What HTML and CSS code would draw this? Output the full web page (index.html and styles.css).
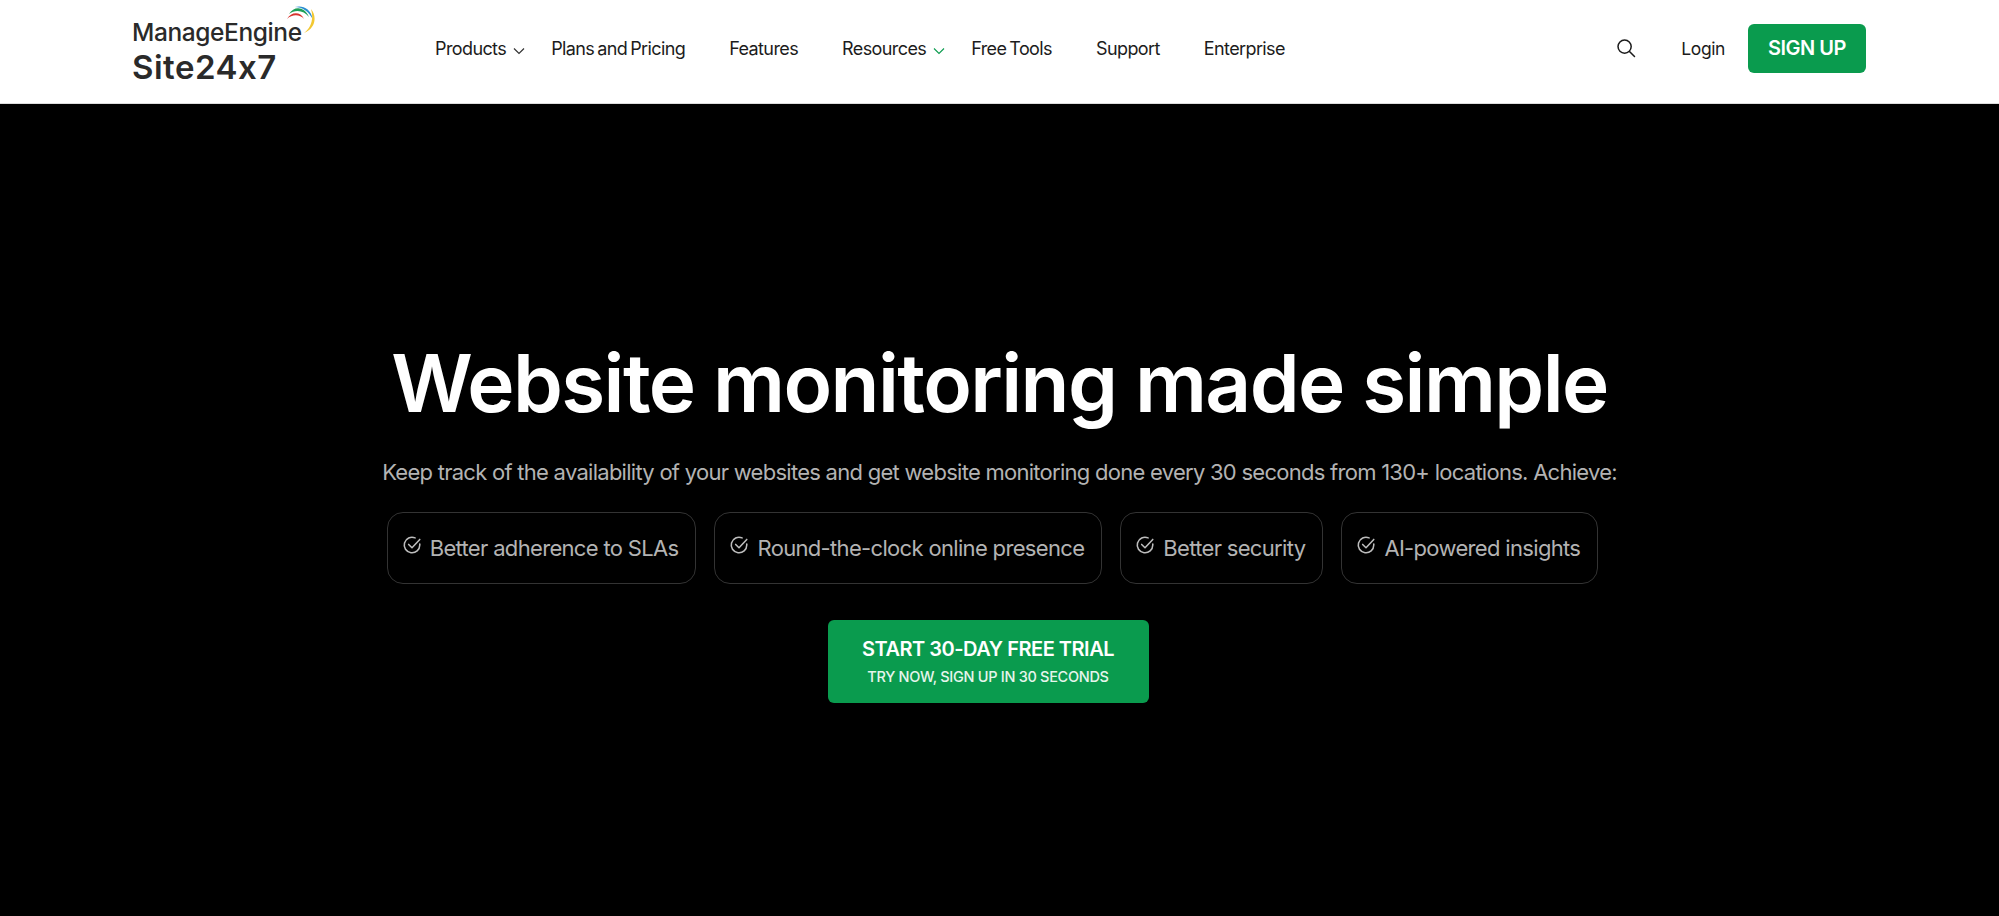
FILE: index.html
```html
<!DOCTYPE html>
<html lang="en">
<head>
<meta charset="utf-8">
<title>Website monitoring made simple</title>
<link rel="stylesheet" href="styles.css">
</head>
<body>
<header class="header">
  <a class="logo" href="#">
    <span class="logo-me">ManageEngine</span>
    <svg class="logo-arc" viewBox="0 0 28 28" width="28" height="28">
      <path d="M0 13C4 6 13 5 17 13C13 8 5 8 0 13Z" fill="#d8322e"/>
      <path d="M2 8C7 0 17 0 22 11C17 4 8 3 2 8Z" fill="#1e9f57"/>
      <path d="M8 1C15 -1 24 2 26 14C22 5 15 1 8 1Z" fill="#2a8fd0"/>
      <path d="M24 3C30 10 29 22 17 27C24 22 27 13 24 3Z" fill="#f2c832"/>
    </svg>
    <span class="logo-site">Site24x7</span>
  </a>
  <nav class="nav">
    <a class="nav-item nav-products" href="#">Products
      <svg class="chev" viewBox="0 0 12 8" width="12" height="8" fill="none" stroke="#333" stroke-width="1.2"><path d="M1 1.5l5 5 5-5"/></svg></a>
    <a class="nav-item nav-plans" href="#">Plans and Pricing</a>
    <a class="nav-item nav-features" href="#">Features</a>
    <a class="nav-item nav-resources" href="#">Resources
      <svg class="chev" viewBox="0 0 12 8" width="12" height="8" fill="none" stroke="#0a9b4e" stroke-width="1.1"><path d="M1 1.5l5 5 5-5"/></svg></a>
    <a class="nav-item nav-free" href="#">Free Tools</a>
    <a class="nav-item nav-support" href="#">Support</a>
    <a class="nav-item" href="#">Enterprise</a>
  </nav>
  <div class="actions">
    <svg class="search" viewBox="0 0 20 20" width="20" height="20" fill="none" stroke="#1c1c1c" stroke-width="1.5" stroke-linecap="round"><circle cx="8.6" cy="8.6" r="6.6"/><path d="M13.5 13.5l5 5"/></svg>
    <a class="login" href="#">Login</a>
    <a class="signup" href="#">SIGN UP</a>
  </div>
</header>
<main class="hero">
  <h1 class="title">Website monitoring made simple</h1>
  <p class="sub">Keep track of the availability of your websites and get website monitoring done every 30 seconds from 130+ locations. Achieve:</p>
  <ul class="pills">
    <li class="pill"><svg class="check" viewBox="0 0 18 18" width="20" height="20" fill="none" stroke="#bdbdbd" stroke-width="1.4" stroke-linecap="round" stroke-linejoin="round"><path d="M16 8.2V9a7 7 0 1 1-4.2-6.4"/><path d="M6 8.5l3 3 7-7.5"/></svg>Better adherence to SLAs</li>
    <li class="pill"><svg class="check" viewBox="0 0 18 18" width="20" height="20" fill="none" stroke="#bdbdbd" stroke-width="1.4" stroke-linecap="round" stroke-linejoin="round"><path d="M16 8.2V9a7 7 0 1 1-4.2-6.4"/><path d="M6 8.5l3 3 7-7.5"/></svg>Round-the-clock online presence</li>
    <li class="pill"><svg class="check" viewBox="0 0 18 18" width="20" height="20" fill="none" stroke="#bdbdbd" stroke-width="1.4" stroke-linecap="round" stroke-linejoin="round"><path d="M16 8.2V9a7 7 0 1 1-4.2-6.4"/><path d="M6 8.5l3 3 7-7.5"/></svg>Better security</li>
    <li class="pill"><svg class="check" viewBox="0 0 18 18" width="20" height="20" fill="none" stroke="#bdbdbd" stroke-width="1.4" stroke-linecap="round" stroke-linejoin="round"><path d="M16 8.2V9a7 7 0 1 1-4.2-6.4"/><path d="M6 8.5l3 3 7-7.5"/></svg>AI-powered insights</li>
  </ul>
  <a class="cta" href="#">
    <span class="cta-main">START 30-DAY FREE TRIAL</span>
    <span class="cta-sub">TRY NOW, SIGN UP IN 30 SECONDS</span>
  </a>
</main>
</body>
</html>
```
FILE: styles.css
```css
* { box-sizing: border-box; }
html, body { margin: 0; height: 100%; }
body {
  font-family: Inter, "Liberation Sans", sans-serif;
  font-variant-ligatures: none;
  font-feature-settings: "calt" 0;
  background: #000;
  display: flex;
  flex-direction: column;
  min-height: 916px;
  overflow: hidden;
}
a { text-decoration: none; color: inherit; }
.header {
  height: 104px;
  flex: none;
  background: #fff;
  border-bottom: 1px solid #ddd;
  display: flex;
  align-items: center;
  padding: 0 133px 7px 132px;
  color: #1c1c1c;
}
.logo {
  position: relative;
  width: 303px;
  flex: none;
  display: flex;
  flex-direction: column;
  color: #2a2a2a;
  padding-top: 10px;
}
.logo-me { font-size: 24.5px; font-weight: 500; letter-spacing: -0.4px; line-height: 27px; }
.logo-site { font-size: 33px; font-weight: 600; line-height: 42px; letter-spacing: 0.5px; }
.logo-arc { position: absolute; left: 155px; top: -3px; }
.nav { display: flex; align-items: center; font-size: 18px; letter-spacing: -0.6px; }
.nav-item { display: flex; align-items: center; margin-right: 44px; white-space: nowrap; }
.nav-products { margin-right: 26px; }
.nav-plans { word-spacing: -1.5px; }
.nav-resources { margin-right: 26px; }
.nav-free { word-spacing: -1.5px; }
.chev { margin-left: 7px; margin-top: 5px; }
.actions { margin-left: auto; display: flex; align-items: center; }
.search { margin-right: 45px; }
.login { font-size: 17.5px; letter-spacing: -0.4px; margin-right: 23px; }
.signup {
  background: #0a9b4e;
  color: #fff;
  font-weight: 600;
  font-size: 20px;
  letter-spacing: -0.5px;
  width: 118px;
  height: 49px;
  border-radius: 6px;
  display: flex;
  align-items: center;
  justify-content: center;
}
.hero {
  flex: 1;
  display: flex;
  flex-direction: column;
  align-items: center;
  padding-top: 225px;
  color: #fff;
}
.title {
  margin: 0;
  font-size: 80px;
  font-weight: 600;
  line-height: 108px;
  letter-spacing: -1.6px;
}
.sub {
  margin: 20px 0 0;
  font-size: 22px;
  line-height: 30px;
  letter-spacing: -0.73px;
  color: #b3b3b3;
}
.pills {
  list-style: none;
  margin: 25px 14px 0 0;
  padding: 0;
  display: flex;
  gap: 18px;
}
.pill {
  height: 72px;
  border: 1px solid #333;
  border-radius: 16px;
  padding: 0 17px 0 14px;
  display: flex;
  align-items: center;
  font-size: 22px;
  letter-spacing: -0.67px;
  color: #b3b3b3;
  white-space: nowrap;
}
.check { margin-right: 8px; margin-top: -6px; flex: none; }
.cta {
  margin: 36px 23px 0 0;
  width: 321px;
  height: 83px;
  background: #0a9b4e;
  border-radius: 6px;
  display: flex;
  flex-direction: column;
  align-items: center;
  justify-content: center;
  color: #fff;
}
.cta-main { font-size: 20px; font-weight: 600; line-height: 28px; letter-spacing: -0.48px; }
.cta-sub { font-size: 14.5px; font-weight: 500; line-height: 24px; letter-spacing: -0.3px; color: #e6f5ec; margin-top: 2px; }
```
